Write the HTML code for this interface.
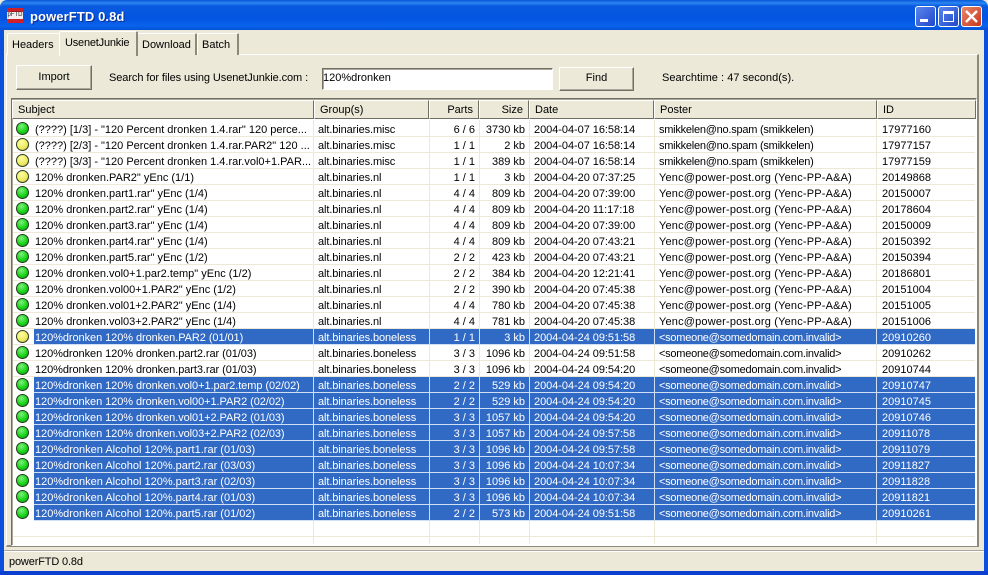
<!DOCTYPE html>
<html><head><meta charset="utf-8"><style>
html,body{margin:0;padding:0;width:988px;height:575px;overflow:hidden;background:#ece9d8}
*{box-sizing:border-box}
body{font:11px/13px "Liberation Sans",sans-serif;color:#000;position:relative}
div,span{position:absolute;white-space:nowrap}
.title{left:0;top:0;width:988px;height:30px;background:linear-gradient(#0a57d8 0,#2a86f2 3px,#0a5ae0 6px,#0354e0 18px,#0a62ec 26px,#0453d8 30px);border-radius:7px 7px 0 0}
.bl{left:0;top:28px;width:4px;height:547px;background:#0a50dc}
.br{left:984px;top:28px;width:4px;height:547px;background:#0a50dc}
.bb{left:0;top:571px;width:988px;height:4px;background:#0a3fd0}
.tt{left:30px;top:9px;font:bold 13px/16px "Liberation Sans",sans-serif;color:#fff;letter-spacing:.1px;text-shadow:1px 1px 0 #0a2f90}
.tb{top:6px;width:21px;height:21px;border:1px solid #fff;border-radius:3px;background:#2a5ce0}
.tab{height:22px;top:33px;border-right:2px solid #8d8a7c;border-top:1px solid #fff;border-left:1px solid #fff;border-radius:2px 2px 0 0;background:#ece9d8;padding:5px 0 0 4px}
.panel{left:6px;top:54px;width:973px;height:493px;border:1px solid #fff;border-right:2px solid #8d8a7c;border-bottom:2px solid #8d8a7c;background:#ece9d8}
.btn{background:#ece9d8;border:1px solid;border-color:#fff #716f64 #716f64 #fff;box-shadow:inset -1px -1px 0 #aca899;text-align:center;padding-top:5px}
.list{left:11px;top:98px;width:966px;height:448px;background:#fff;border:1px solid;border-color:#716f64 #fff #fff #716f64;box-shadow:inset 1px 1px 0 #aca899}
.h{top:100px;height:19px;background:#ece9d8;border:1px solid;border-color:#fff #716f64 #716f64 #fff;padding:3px 0 0 5px}
.h.r{text-align:right;padding:3px 5px 0 0}
.r0{left:13px;width:962px;height:16px}
.r0 span{top:3px}
.line{left:13px;width:962px;height:1px;background:#ece9d8}
.v{top:120px;width:1px;height:424px;background:#ece9d8}
.sel{color:#fff}
.sel i{position:absolute;top:0;left:21px;width:941px;height:15px;background:#316ac5}
.sel b{position:absolute;top:0;width:1px;height:16px;background:#cfe0f5}
.sel u{position:absolute;top:15px;left:21px;width:941px;height:1px;background:#cfe0f5}
.dot{position:absolute;left:3px;top:1px;width:13px;height:13px;border-radius:50%;border:1px solid #2a3a20}
.g{background:radial-gradient(circle at 40% 30%,#7cf47c,#12d012 60%,#0a9a0a)}
.y{background:radial-gradient(circle at 40% 30%,#fdfda0,#eee860 60%,#b0a838)}
.c1{left:22px}.c2{left:305px;letter-spacing:-.1px}.c3{left:416px;width:46px;text-align:right}.c4{left:466px;width:46px;text-align:right}.c5{left:521px;letter-spacing:-.05px}.c6{left:646px}.c7{left:869px}
.s6{letter-spacing:-.24px}.y6{letter-spacing:.18px}.n6{letter-spacing:-.25px}
.sel .c1{letter-spacing:-.07px}
</style></head><body>
<div class="title"></div><div class="bl"></div><div class="br"></div><div class="bb"></div>
<div style="left:7px;top:8px;width:16px;height:15px;background:#d0202a"><div style="left:0;top:4px;width:16px;height:7px;background:#f4f0f0;color:#222;font:6px/7px 'Liberation Sans',sans-serif;text-align:center">pFTD</div></div>
<div class="tt">powerFTD 0.8d</div>
<div class="tb" style="left:915px;background:linear-gradient(135deg,#5a86ee,#2048c8)"><div style="left:4px;top:12px;width:8px;height:3px;background:#fff"></div></div>
<div class="tb" style="left:938px;background:linear-gradient(135deg,#5a86ee,#2048c8)"><div style="left:4px;top:4px;width:11px;height:11px;border:1px solid #fff;border-top:3px solid #fff"></div></div>
<div class="tb" style="left:961px;background:linear-gradient(135deg,#e8866a,#c8381c)"><svg style="position:absolute;left:3px;top:3px" width="13" height="13"><path d="M1 1L12 12M12 1L1 12" stroke="#fff" stroke-width="2.4"/></svg></div>
<div class="panel"></div>
<div class="tab" style="left:7px;width:52px;border-right:0">Headers</div>
<div class="tab" style="left:137px;width:60px">Download</div>
<div class="tab" style="left:197px;width:42px">Batch</div>
<div class="tab" style="left:59px;width:79px;top:31px;height:25px;padding:5px 0 0 5px;z-index:2;letter-spacing:-.2px">UsenetJunkie</div>
<div class="btn" style="left:16px;top:65px;width:76px;height:25px">Import</div>
<div style="left:109px;top:72px;letter-spacing:-.08px">Search for files using UsenetJunkie.com :</div>
<div style="left:322px;top:68px;width:231px;height:22px;background:#fff;border:1px solid;border-color:#716f64 #fff #fff #716f64;box-shadow:inset 1px 1px 0 #aca899;padding:3px 0 0 0"><span style="left:0;top:3px">120%dronken</span></div>
<div class="btn" style="left:559px;top:67px;width:75px;height:24px;padding-top:4px">Find</div>
<div style="left:662px;top:72px;letter-spacing:.03px">Searchtime : 47 second(s).</div>
<div class="list"></div>
<div class="h" style="left:12px;width:302px">Subject</div>
<div class="h" style="left:314px;width:115px">Group(s)</div>
<div class="h r" style="left:429px;width:50px">Parts</div>
<div class="h r" style="left:479px;width:50px">Size</div>
<div class="h" style="left:529px;width:125px">Date</div>
<div class="h" style="left:654px;width:223px">Poster</div>
<div class="h" style="left:877px;width:99px">ID</div>
<div class="v" style="left:313px"></div><div class="v" style="left:429px"></div><div class="v" style="left:479px"></div><div class="v" style="left:529px"></div><div class="v" style="left:654px"></div><div class="v" style="left:876px"></div>
<div class="line" style="top:136px"></div><div class="line" style="top:152px"></div><div class="line" style="top:168px"></div><div class="line" style="top:184px"></div><div class="line" style="top:200px"></div><div class="line" style="top:216px"></div><div class="line" style="top:232px"></div><div class="line" style="top:248px"></div><div class="line" style="top:264px"></div><div class="line" style="top:280px"></div><div class="line" style="top:296px"></div><div class="line" style="top:312px"></div><div class="line" style="top:328px"></div><div class="line" style="top:344px"></div><div class="line" style="top:360px"></div><div class="line" style="top:376px"></div><div class="line" style="top:536px"></div>

<div class="r0" style="top:121px"><em class="dot g"></em><span class="c1">(????) [1/3] - "120 Percent dronken 1.4.rar" 120 perce...</span><span class="c2">alt.binaries.misc</span><span class="c3">6 / 6</span><span class="c4">3730 kb</span><span class="c5">2004-04-07 16:58:14</span><span class="c6 s6">smikkelen@no.spam (smikkelen)</span><span class="c7">17977160</span></div>
<div class="r0" style="top:137px"><em class="dot y"></em><span class="c1">(????) [2/3] - "120 Percent dronken 1.4.rar.PAR2" 120 ...</span><span class="c2">alt.binaries.misc</span><span class="c3">1 / 1</span><span class="c4">2 kb</span><span class="c5">2004-04-07 16:58:14</span><span class="c6 s6">smikkelen@no.spam (smikkelen)</span><span class="c7">17977157</span></div>
<div class="r0" style="top:153px"><em class="dot y"></em><span class="c1">(????) [3/3] - "120 Percent dronken 1.4.rar.vol0+1.PAR...</span><span class="c2">alt.binaries.misc</span><span class="c3">1 / 1</span><span class="c4">389 kb</span><span class="c5">2004-04-07 16:58:14</span><span class="c6 s6">smikkelen@no.spam (smikkelen)</span><span class="c7">17977159</span></div>
<div class="r0" style="top:169px"><em class="dot y"></em><span class="c1">120% dronken.PAR2" yEnc (1/1)</span><span class="c2">alt.binaries.nl</span><span class="c3">1 / 1</span><span class="c4">3 kb</span><span class="c5">2004-04-20 07:37:25</span><span class="c6 y6">Yenc@power-post.org (Yenc-PP-A&amp;A)</span><span class="c7">20149868</span></div>
<div class="r0" style="top:185px"><em class="dot g"></em><span class="c1">120% dronken.part1.rar" yEnc (1/4)</span><span class="c2">alt.binaries.nl</span><span class="c3">4 / 4</span><span class="c4">809 kb</span><span class="c5">2004-04-20 07:39:00</span><span class="c6 y6">Yenc@power-post.org (Yenc-PP-A&amp;A)</span><span class="c7">20150007</span></div>
<div class="r0" style="top:201px"><em class="dot g"></em><span class="c1">120% dronken.part2.rar" yEnc (1/4)</span><span class="c2">alt.binaries.nl</span><span class="c3">4 / 4</span><span class="c4">809 kb</span><span class="c5">2004-04-20 11:17:18</span><span class="c6 y6">Yenc@power-post.org (Yenc-PP-A&amp;A)</span><span class="c7">20178604</span></div>
<div class="r0" style="top:217px"><em class="dot g"></em><span class="c1">120% dronken.part3.rar" yEnc (1/4)</span><span class="c2">alt.binaries.nl</span><span class="c3">4 / 4</span><span class="c4">809 kb</span><span class="c5">2004-04-20 07:39:00</span><span class="c6 y6">Yenc@power-post.org (Yenc-PP-A&amp;A)</span><span class="c7">20150009</span></div>
<div class="r0" style="top:233px"><em class="dot g"></em><span class="c1">120% dronken.part4.rar" yEnc (1/4)</span><span class="c2">alt.binaries.nl</span><span class="c3">4 / 4</span><span class="c4">809 kb</span><span class="c5">2004-04-20 07:43:21</span><span class="c6 y6">Yenc@power-post.org (Yenc-PP-A&amp;A)</span><span class="c7">20150392</span></div>
<div class="r0" style="top:249px"><em class="dot g"></em><span class="c1">120% dronken.part5.rar" yEnc (1/2)</span><span class="c2">alt.binaries.nl</span><span class="c3">2 / 2</span><span class="c4">423 kb</span><span class="c5">2004-04-20 07:43:21</span><span class="c6 y6">Yenc@power-post.org (Yenc-PP-A&amp;A)</span><span class="c7">20150394</span></div>
<div class="r0" style="top:265px"><em class="dot g"></em><span class="c1">120% dronken.vol0+1.par2.temp" yEnc (1/2)</span><span class="c2">alt.binaries.nl</span><span class="c3">2 / 2</span><span class="c4">384 kb</span><span class="c5">2004-04-20 12:21:41</span><span class="c6 y6">Yenc@power-post.org (Yenc-PP-A&amp;A)</span><span class="c7">20186801</span></div>
<div class="r0" style="top:281px"><em class="dot g"></em><span class="c1">120% dronken.vol00+1.PAR2" yEnc (1/2)</span><span class="c2">alt.binaries.nl</span><span class="c3">2 / 2</span><span class="c4">390 kb</span><span class="c5">2004-04-20 07:45:38</span><span class="c6 y6">Yenc@power-post.org (Yenc-PP-A&amp;A)</span><span class="c7">20151004</span></div>
<div class="r0" style="top:297px"><em class="dot g"></em><span class="c1">120% dronken.vol01+2.PAR2" yEnc (1/4)</span><span class="c2">alt.binaries.nl</span><span class="c3">4 / 4</span><span class="c4">780 kb</span><span class="c5">2004-04-20 07:45:38</span><span class="c6 y6">Yenc@power-post.org (Yenc-PP-A&amp;A)</span><span class="c7">20151005</span></div>
<div class="r0" style="top:313px"><em class="dot g"></em><span class="c1">120% dronken.vol03+2.PAR2" yEnc (1/4)</span><span class="c2">alt.binaries.nl</span><span class="c3">4 / 4</span><span class="c4">781 kb</span><span class="c5">2004-04-20 07:45:38</span><span class="c6 y6">Yenc@power-post.org (Yenc-PP-A&amp;A)</span><span class="c7">20151006</span></div>
<div class="r0 sel" style="top:329px"><i></i><u></u><b style="left:300px"></b><b style="left:416px"></b><b style="left:466px"></b><b style="left:516px"></b><b style="left:641px"></b><b style="left:863px"></b><em class="dot y"></em><span class="c1">120%dronken 120% dronken.PAR2 (01/01)</span><span class="c2">alt.binaries.boneless</span><span class="c3">1 / 1</span><span class="c4">3 kb</span><span class="c5">2004-04-24 09:51:58</span><span class="c6 n6">&lt;someone@somedomain.com.invalid&gt;</span><span class="c7">20910260</span></div>
<div class="r0" style="top:345px"><em class="dot g"></em><span class="c1" style="letter-spacing:-.07px">120%dronken 120% dronken.part2.rar (01/03)</span><span class="c2">alt.binaries.boneless</span><span class="c3">3 / 3</span><span class="c4">1096 kb</span><span class="c5">2004-04-24 09:51:58</span><span class="c6 n6">&lt;someone@somedomain.com.invalid&gt;</span><span class="c7">20910262</span></div>
<div class="r0" style="top:361px"><em class="dot g"></em><span class="c1" style="letter-spacing:-.07px">120%dronken 120% dronken.part3.rar (01/03)</span><span class="c2">alt.binaries.boneless</span><span class="c3">3 / 3</span><span class="c4">1096 kb</span><span class="c5">2004-04-24 09:54:20</span><span class="c6 n6">&lt;someone@somedomain.com.invalid&gt;</span><span class="c7">20910744</span></div>
<div class="r0 sel" style="top:377px"><i></i><u></u><b style="left:300px"></b><b style="left:416px"></b><b style="left:466px"></b><b style="left:516px"></b><b style="left:641px"></b><b style="left:863px"></b><em class="dot g"></em><span class="c1">120%dronken 120% dronken.vol0+1.par2.temp (02/02)</span><span class="c2">alt.binaries.boneless</span><span class="c3">2 / 2</span><span class="c4">529 kb</span><span class="c5">2004-04-24 09:54:20</span><span class="c6 n6">&lt;someone@somedomain.com.invalid&gt;</span><span class="c7">20910747</span></div>
<div class="r0 sel" style="top:393px"><i></i><u></u><b style="left:300px"></b><b style="left:416px"></b><b style="left:466px"></b><b style="left:516px"></b><b style="left:641px"></b><b style="left:863px"></b><em class="dot g"></em><span class="c1">120%dronken 120% dronken.vol00+1.PAR2 (02/02)</span><span class="c2">alt.binaries.boneless</span><span class="c3">2 / 2</span><span class="c4">529 kb</span><span class="c5">2004-04-24 09:54:20</span><span class="c6 n6">&lt;someone@somedomain.com.invalid&gt;</span><span class="c7">20910745</span></div>
<div class="r0 sel" style="top:409px"><i></i><u></u><b style="left:300px"></b><b style="left:416px"></b><b style="left:466px"></b><b style="left:516px"></b><b style="left:641px"></b><b style="left:863px"></b><em class="dot g"></em><span class="c1">120%dronken 120% dronken.vol01+2.PAR2 (01/03)</span><span class="c2">alt.binaries.boneless</span><span class="c3">3 / 3</span><span class="c4">1057 kb</span><span class="c5">2004-04-24 09:54:20</span><span class="c6 n6">&lt;someone@somedomain.com.invalid&gt;</span><span class="c7">20910746</span></div>
<div class="r0 sel" style="top:425px"><i></i><u></u><b style="left:300px"></b><b style="left:416px"></b><b style="left:466px"></b><b style="left:516px"></b><b style="left:641px"></b><b style="left:863px"></b><em class="dot g"></em><span class="c1">120%dronken 120% dronken.vol03+2.PAR2 (02/03)</span><span class="c2">alt.binaries.boneless</span><span class="c3">3 / 3</span><span class="c4">1057 kb</span><span class="c5">2004-04-24 09:57:58</span><span class="c6 n6">&lt;someone@somedomain.com.invalid&gt;</span><span class="c7">20911078</span></div>
<div class="r0 sel" style="top:441px"><i></i><u></u><b style="left:300px"></b><b style="left:416px"></b><b style="left:466px"></b><b style="left:516px"></b><b style="left:641px"></b><b style="left:863px"></b><em class="dot g"></em><span class="c1" style="letter-spacing:0">120%dronken Alcohol 120%.part1.rar (01/03)</span><span class="c2">alt.binaries.boneless</span><span class="c3">3 / 3</span><span class="c4">1096 kb</span><span class="c5">2004-04-24 09:57:58</span><span class="c6 n6">&lt;someone@somedomain.com.invalid&gt;</span><span class="c7">20911079</span></div>
<div class="r0 sel" style="top:457px"><i></i><u></u><b style="left:300px"></b><b style="left:416px"></b><b style="left:466px"></b><b style="left:516px"></b><b style="left:641px"></b><b style="left:863px"></b><em class="dot g"></em><span class="c1" style="letter-spacing:0">120%dronken Alcohol 120%.part2.rar (03/03)</span><span class="c2">alt.binaries.boneless</span><span class="c3">3 / 3</span><span class="c4">1096 kb</span><span class="c5">2004-04-24 10:07:34</span><span class="c6 n6">&lt;someone@somedomain.com.invalid&gt;</span><span class="c7">20911827</span></div>
<div class="r0 sel" style="top:473px"><i></i><u></u><b style="left:300px"></b><b style="left:416px"></b><b style="left:466px"></b><b style="left:516px"></b><b style="left:641px"></b><b style="left:863px"></b><em class="dot g"></em><span class="c1" style="letter-spacing:0">120%dronken Alcohol 120%.part3.rar (02/03)</span><span class="c2">alt.binaries.boneless</span><span class="c3">3 / 3</span><span class="c4">1096 kb</span><span class="c5">2004-04-24 10:07:34</span><span class="c6 n6">&lt;someone@somedomain.com.invalid&gt;</span><span class="c7">20911828</span></div>
<div class="r0 sel" style="top:489px"><i></i><u></u><b style="left:300px"></b><b style="left:416px"></b><b style="left:466px"></b><b style="left:516px"></b><b style="left:641px"></b><b style="left:863px"></b><em class="dot g"></em><span class="c1" style="letter-spacing:0">120%dronken Alcohol 120%.part4.rar (01/03)</span><span class="c2">alt.binaries.boneless</span><span class="c3">3 / 3</span><span class="c4">1096 kb</span><span class="c5">2004-04-24 10:07:34</span><span class="c6 n6">&lt;someone@somedomain.com.invalid&gt;</span><span class="c7">20911821</span></div>
<div class="r0 sel" style="top:505px"><i></i><u></u><b style="left:300px"></b><b style="left:416px"></b><b style="left:466px"></b><b style="left:516px"></b><b style="left:641px"></b><b style="left:863px"></b><em class="dot g"></em><span class="c1" style="letter-spacing:0">120%dronken Alcohol 120%.part5.rar (01/02)</span><span class="c2">alt.binaries.boneless</span><span class="c3">2 / 2</span><span class="c4">573 kb</span><span class="c5">2004-04-24 09:51:58</span><span class="c6 n6">&lt;someone@somedomain.com.invalid&gt;</span><span class="c7">20910261</span></div>

<div style="left:4px;top:550px;width:980px;height:21px;background:#ece9d8;border-top:1px solid #aca899;box-shadow:inset 0 1px 0 #fff"></div>
<div style="left:9px;top:556px;letter-spacing:-.15px">powerFTD 0.8d</div>
</body></html>
